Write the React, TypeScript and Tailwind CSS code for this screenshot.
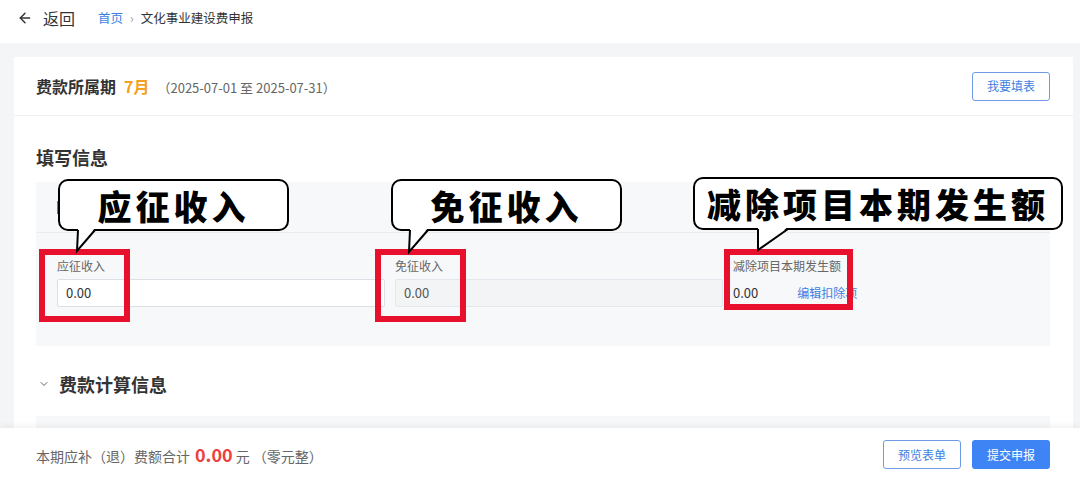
import React from 'react';
import { ArrowLeft, ChevronDown } from 'lucide-react';

const font = { fontFamily: '"Noto Sans CJK SC", "Noto Sans", sans-serif' };

type Callout = {
  text: string;
  left: number;
  top: number;
  width: number;
  height: number;
  tail: [number, number, number]; // left x, right x, tip x (page coords)
  tip: number; // tip y
};

const callouts: Callout[] = [
  { text: '应征收入', left: 58, top: 179, width: 231, height: 52, tail: [78, 95, 77], tip: 251 },
  { text: '免征收入', left: 391, top: 179, width: 231, height: 52, tail: [410, 428, 409], tip: 252 },
  { text: '减除项目本期发生额', left: 693, top: 177, width: 370, height: 53, tail: [758, 788, 758], tip: 250 },
];

const redBoxes = [
  { left: 39, top: 249, width: 91, height: 73 },
  { left: 375, top: 249, width: 91, height: 73 },
  { left: 724, top: 249, width: 129, height: 61 },
];

function Bubble({ c }: { c: Callout }) {
  const bottom = c.top + c.height;
  const [lx, rx, tx] = c.tail;
  return (
    <>
      <div
        className="absolute flex items-center justify-center rounded-[10px] border-2 border-black bg-white text-[34px] font-black tracking-[4px] text-black"
        style={{ left: c.left, top: c.top, width: c.width, height: c.height }}
      >
        {c.text}
      </div>
      <svg
        className="absolute"
        style={{ left: 0, top: 0 }}
        width={1080}
        height={481}
        viewBox="0 0 1080 481"
      >
        <polygon points={`${lx},${bottom - 3} ${rx},${bottom - 3} ${tx},${c.tip}`} fill="#fff" />
        <polyline
          points={`${lx},${bottom - 1} ${tx},${c.tip} ${rx},${bottom - 1}`}
          fill="none"
          stroke="#000"
          strokeWidth={2}
          strokeLinejoin="miter"
        />
      </svg>
    </>
  );
}

function App() {
  return (
    <div className="relative h-[481px] w-[1080px] overflow-hidden bg-[#f4f5f7]" style={font}>
      {/* top nav */}
      <div className="flex h-[43px] items-center bg-white pb-[7px] pl-[17px]">
        <ArrowLeft size={16} strokeWidth={2.2} className="text-[#333]" />
        <span className="ml-[10px] text-[16px] text-[#333]">返回</span>
        <span className="ml-[23px] text-[12.5px] text-[#3d7fe0]">首页</span>
        <span className="mx-[7px] text-[12px] text-[#999]">›</span>
        <span className="text-[12.5px] text-[#333]">文化事业建设费申报</span>
      </div>

      {/* card */}
      <div className="ml-[14px] mt-[14px] w-[1059px] bg-white">
        <div className="flex h-[59px] items-center justify-between border-b border-[#eef0f3] pl-[22px] pr-[23px]">
          <div className="flex items-baseline">
            <span className="text-[16px] font-bold text-[#333]">费款所属期</span>
            <span className="ml-[8px] text-[16px] font-bold text-[#f5a020]">7月</span>
            <span className="ml-[8px] text-[13px] text-[#666]">（2025-07-01 至 2025-07-31）</span>
          </div>
          <button className="h-[29px] w-[78px] rounded-[3px] border border-[#6f9be6] text-[12px] text-[#3d7fe0]">
            我要填表
          </button>
        </div>

        <div className="pl-[22px] pr-[23px] pt-[29px]">
          <h2 className="text-[18px] font-bold leading-[24px] text-[#333]">填写信息</h2>

          <div className="mt-[13px] bg-[#f7f8fa]">
            <div className="flex h-[51px] items-center border-b border-[#eaecef] pl-[21px]">
              <span className="h-[13px] w-[2px] bg-[#3d7fe0]" />
            </div>
            <div className="grid grid-cols-[328px_328px_1fr] gap-x-[10px] pb-[39px] pl-[21px] pr-[21px] pt-[24px]">
              <div>
                <div className="text-[12px] leading-[17px] text-[#666]">应征收入</div>
                <div className="mt-[5px] flex h-[28px] items-center rounded-[2px] border border-[#dcdfe6] bg-white pl-[8px] text-[13px] text-[#333]">
                  0.00
                </div>
              </div>
              <div>
                <div className="text-[12px] leading-[17px] text-[#666]">免征收入</div>
                <div className="mt-[5px] flex h-[28px] items-center rounded-[2px] border border-[#e4e7ed] bg-[#f3f4f6] pl-[8px] text-[13px] text-[#555]">
                  0.00
                </div>
              </div>
              <div>
                <div className="text-[12px] leading-[17px] text-[#666]">减除项目本期发生额</div>
                <div className="mt-[5px] flex h-[28px] items-center text-[13px] text-[#333]">
                  <span>0.00</span>
                  <span className="ml-[39px] text-[12px] text-[#3d7fe0]">编辑扣除项</span>
                </div>
              </div>
            </div>
          </div>

          <div className="mt-[26px] flex items-center">
            <ChevronDown size={12} strokeWidth={2} className="ml-[2px] text-[#666]" />
            <h2 className="ml-[9px] text-[18px] font-bold leading-[24px] text-[#333]">费款计算信息</h2>
          </div>
          <div className="mt-[20px] h-[80px] bg-[#f7f8fa]" />
        </div>
      </div>

      {/* bottom bar */}
      <div className="absolute bottom-0 left-0 flex h-[53px] w-[1080px] items-center justify-between bg-white pl-[36px] pr-[30px] shadow-[0_-2px_6px_rgba(0,0,0,0.06)]">
        <div className="flex items-baseline text-[14px] text-[#666]">
          <span>本期应补（退）费额合计</span>
          <span className="ml-[5px] text-[18px] font-bold text-[#ef3e3e]">0.00</span>
          <span className="ml-[3px]">元 （零元整）</span>
        </div>
        <div className="flex gap-[11px]">
          <button className="h-[29px] w-[78px] rounded-[3px] border border-[#6f9be6] bg-white text-[12px] text-[#3d7fe0]">
            预览表单
          </button>
          <button className="h-[29px] w-[78px] rounded-[3px] bg-[#3e84f4] text-[12px] text-white">
            提交申报
          </button>
        </div>
      </div>

      {/* annotations */}
      {redBoxes.map((b, i) => (
        <div
          key={i}
          className="absolute border-[6px] border-[#e8112d]"
          style={{ left: b.left, top: b.top, width: b.width, height: b.height }}
        />
      ))}
      {callouts.map((c) => (
        <Bubble key={c.text} c={c} />
      ))}
    </div>
  );
}

export default App;
